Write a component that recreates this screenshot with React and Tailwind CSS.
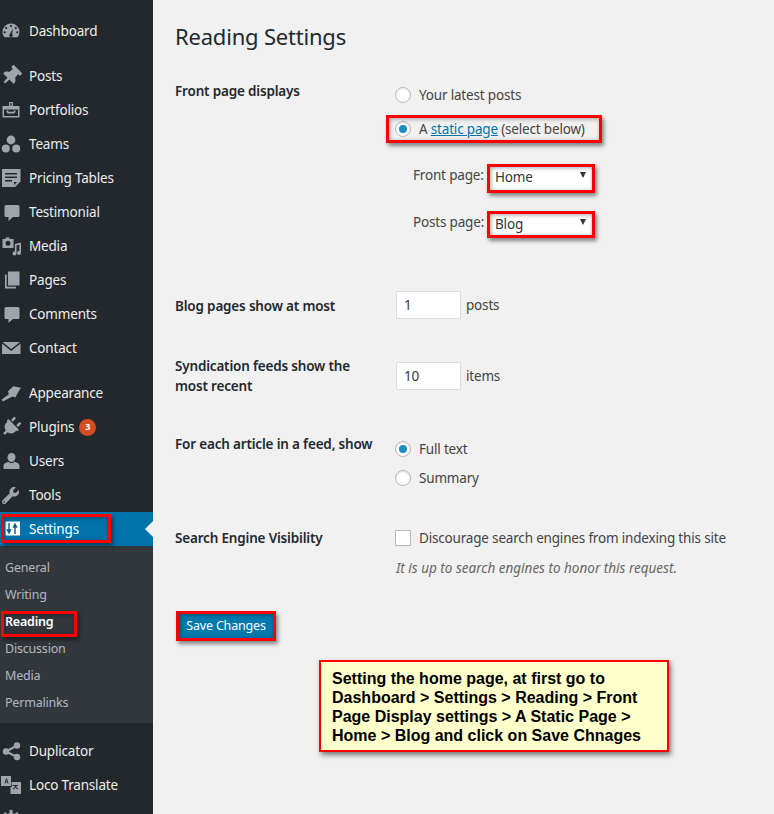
import { FaThumbtack, FaPlug, FaWrench } from 'react-icons/fa'

const Gauge = () => (
  <svg viewBox="0 0 20 20" className="h-5 w-5" fill="currentColor">
    <path fillRule="evenodd" d="M10 2.500A8.500 8.500 0 0 0 1.500 11c0 2 .7 3.800 1.900 5.200h13.200A8.500 8.500 0 0 0 18.500 11 8.500 8.500 0 0 0 10 2.500zM10 4a1.100 1.100 0 1 1 0 2.200A1.100 1.100 0 0 1 10 4zM5.200 6a1.100 1.100 0 1 1 0 2.200 1.100 1.100 0 0 1 0-2.200zm9.600 0a1.100 1.100 0 1 1 0 2.200 1.100 1.100 0 0 1 0-2.200zM3.700 10.200a1.100 1.100 0 1 1 0 2.200 1.100 1.100 0 0 1 0-2.200zm12.600 0a1.100 1.100 0 1 1 0 2.200 1.100 1.100 0 0 1 0-2.200zM12 7.500l-.9 5.600a1.700 1.700 0 1 1-2.200 0z" />
  </svg>
)

const Portfolio = () => (
  <svg viewBox="0 0 20 20" className="h-5 w-5" fill="currentColor">
    <path fillRule="evenodd" d="M8 2h4v4h6.500v11.500h-17V6H8zm1.200 1.200v2.400h1.600V3.200zM3 8v8h14V8zm2.500 2.500h1.800v1.300h5.400v-1.300h1.800v1.600l-1.400 1.500H6.900l-1.400-1.500z" />
    <path d="M3 8h14v1.500H3z" />
  </svg>
)

const Team = () => (
  <svg viewBox="0 0 20 20" className="h-5 w-5" fill="currentColor">
    <circle cx="10" cy="6" r="4.400" />
    <circle cx="4.800" cy="14.500" r="4" />
    <circle cx="15.200" cy="14.500" r="4" />
  </svg>
)

const Pricing = () => (
  <svg viewBox="0 0 20 20" className="h-5 w-5" fill="currentColor">
    <path fillRule="evenodd" d="M1 1h18.500v12.500l-5.500 5.500H1zM4 5v1.500h12V5zm0 3.500V10h12V8.500zm0 3.500v1.500h7V12zm9 2v3l3-3z" />
  </svg>
)

const Bubble = () => (
  <svg viewBox="0 0 20 20" className="h-5 w-5" fill="currentColor">
    <path d="M5 3h12a1.500 1.500 0 0 1 1.500 1.500v9A1.500 1.500 0 0 1 17 15h-5l-4.500 4v-4H5a1.500 1.500 0 0 1-1.500-1.500v-9A1.500 1.500 0 0 1 5 3z" />
  </svg>
)

const MediaIcon = () => (
  <svg viewBox="0 0 20 20" className="h-5 w-5" fill="currentColor">
    <path fillRule="evenodd" d="M4.500 1.500h4V3H12.500v9H1.500V3h3zM7 4.800a2.500 2.500 0 1 0 0 5 2.500 2.500 0 0 0 0-5z" />
    <path d="M14 8l6-1.500v10.500a2 2 0 1 1-1.700-2v-6.500L15.500 9.500v8a2 2 0 1 1-1.700-2z" />
  </svg>
)

const PagesIcon = () => (
  <svg viewBox="0 0 20 20" className="h-5 w-5" fill="currentColor">
    <path d="M7 1.500h11.500v14H7z" />
    <path d="M4 4.500h1.700v12.300H15v1.700H4z" />
  </svg>
)

const Mail = () => (
  <svg viewBox="0 0 20 20" className="h-5 w-5" fill="currentColor">
    <path d="M1.500 4h17.500L10.200 11z" />
    <path d="M1 5.500l9.200 7.500 9.300-7.500V16H1z" />
  </svg>
)

const Brush = () => (
  <svg viewBox="0 0 20 20" className="h-5 w-5" fill="currentColor">
    <path d="M1.800 18.500L.8 16.500l7-5.200-.8-3 5.300-5 7.700 1.500-3 4.800-2.700 4.800-2.800-1z" />
  </svg>
)

const UserIcon = () => (
  <svg viewBox="0 0 20 20" className="h-5 w-5" fill="currentColor">
    <path d="M10.500 2a4 4 0 0 1 4 4.200c0 2.300-1.800 4.800-4 4.800s-4-2.500-4-4.800a4 4 0 0 1 4-4.200z" />
    <path d="M7.300 10.800c1.700 1.700 4.700 1.700 6.400 0 2.800.7 4.800 2.200 4.800 4.200v3h-16v-3c0-2 2-3.500 4.800-4.200z" />
  </svg>
)

const Sliders = () => (
  <svg viewBox="0 0 20 20" className="h-5 w-5">
    <rect x="4.500" y="2.500" width="14.500" height="14" fill="#ffffff" />
    <path d="M8 4v7M6.500 11h3L8 14zM14 15V8M12.500 8h3L14 5z" stroke="#0a5f8f" strokeWidth="1.400" fill="#0a5f8f" />
  </svg>
)

const Share = () => (
  <svg viewBox="0 0 20 20" className="h-5 w-5" fill="currentColor">
    <circle cx="16" cy="4.500" r="3.200" />
    <circle cx="5" cy="10.500" r="3.200" />
    <circle cx="16" cy="16" r="3.200" />
    <path d="M5 10.500l11-6M5 10.500l11 5.500" stroke="currentColor" strokeWidth="2" />
  </svg>
)

const Translate = () => (
  <svg viewBox="0 0 20 20" className="h-5 w-5" fill="currentColor">
    <path fillRule="evenodd" d="M0 1h10v10H0zM3.500 8.500h1L4.900 7h1.200l.4 1.500h1L6 3.500H5zM5.500 4.800l.4 1.400H5.100z" />
    <path fillRule="evenodd" d="M10.500 7H20v12H9.500v-7H11zM11.800 10v1h2.300c-.4 1-1.200 2-2.500 2.800l.6.800c1-.6 1.800-1.300 2.300-2.100.5.800 1.300 1.500 2.300 2.100l.6-.8c-1.300-.8-2.100-1.800-2.500-2.800h2.100v-1z" />
  </svg>
)

const Gear = () => (
  <svg viewBox="0 0 20 20" className="h-5 w-5" fill="currentColor">
    <path d="M8.500 1h3v3l2.200 1 2.100-2.100 2.100 2.100-2.100 2.200 1 2.300h3v3h-3l-1 2.200 2.100 2.100-2.100 2.100-2.100-2.100-2.200 1v3h-3v-3l-2.200-1-2.100 2.100-2.100-2.100 2.100-2.100-1-2.200h-3v-3h3l1-2.300-2.100-2.200 2.100-2.100 2.100 2.100 2.200-1z" />
  </svg>
)

function MenuItem({ icon, label, active, badge }) {
  return (
    <div className={`relative flex h-[34px] items-center ${active ? 'bg-[#0073aa] text-white' : 'text-[#eeeeee]'}`}>
      <span className={`flex w-[21px] justify-center ${active ? '' : 'text-[#a0a5aa]'}`}>{icon}</span>
      <span className="ml-2">{label}</span>
      {badge && (
        <span className="ml-[5px] flex h-[17px] w-[17px] items-center justify-center rounded-full bg-[#d54e21] text-[9px] font-bold text-white">
          {badge}
        </span>
      )}
      {active && (
        <span className="absolute right-0 top-[9px] border-y-[8px] border-r-[8px] border-y-transparent border-r-[#f1f1f1]" />
      )}
    </div>
  )
}

function SubItem({ label, current }) {
  return (
    <div className={`flex h-[27px] items-center pl-[5px] text-[12.500px] tracking-[-0.2px] ${current ? 'font-semibold text-white' : 'text-[#b4b9be]'}`}>
      {label}
    </div>
  )
}

function Sidebar() {
  return (
    <aside className="h-[814px] w-[153px] shrink-0 overflow-hidden bg-[#23282d] pt-[14px]">
      <MenuItem icon={<Gauge />} label="Dashboard" />
      <div className="h-[11px]" />
      <MenuItem icon={<FaThumbtack className="h-5 w-5 rotate-45" />} label="Posts" />
      <MenuItem icon={<Portfolio />} label="Portfolios" />
      <MenuItem icon={<Team />} label="Teams" />
      <MenuItem icon={<Pricing />} label="Pricing Tables" />
      <MenuItem icon={<Bubble />} label="Testimonial" />
      <MenuItem icon={<MediaIcon />} label="Media" />
      <MenuItem icon={<PagesIcon />} label="Pages" />
      <MenuItem icon={<Bubble />} label="Comments" />
      <MenuItem icon={<Mail />} label="Contact" />
      <div className="h-[11px]" />
      <MenuItem icon={<Brush />} label="Appearance" />
      <MenuItem icon={<FaPlug className="h-5 w-5 rotate-45" />} label="Plugins" badge="3" />
      <MenuItem icon={<UserIcon />} label="Users" />
      <MenuItem icon={<FaWrench className="h-[17px] w-[17px]" />} label="Tools" />
      <MenuItem icon={<Sliders />} label="Settings" active />
      <div className="h-[177px] bg-[#32373c] pt-[8.500px]">
        <SubItem label="General" />
        <SubItem label="Writing" />
        <SubItem label="Reading" current />
        <SubItem label="Discussion" />
        <SubItem label="Media" />
        <SubItem label="Permalinks" />
      </div>
      <div className="h-[11px]" />
      <MenuItem icon={<Share />} label="Duplicator" />
      <MenuItem icon={<Translate />} label="Loco Translate" />
      <MenuItem icon={<Gear />} label="" />
    </aside>
  )
}

function Radio({ checked }) {
  return (
    <span className="-ml-px flex h-4 w-4 shrink-0 items-center justify-center rounded-full border border-[#b4b9be] bg-white shadow-[inset_0_1px_2px_rgba(0,0,0,0.1)]">
      {checked && <span className="h-2 w-2 rounded-full bg-[#1e8cbe]" />}
    </span>
  )
}

function SelectBox({ label }) {
  return (
    <div className="relative flex h-[26px] w-[102px] items-center bg-white pb-px pl-[6px] text-[#32373c]">
      {label}
      <span className="absolute right-[5px] top-[7px] border-x-[3.500px] border-t-[6px] border-x-transparent border-t-[#333333]" />
    </div>
  )
}

function NumberBox({ value, className = '' }) {
  return (
    <div className={`flex h-[28px] w-[65px] items-center border border-[#dddddd] bg-white pl-[7px] text-[#32373c] ${className}`}>
      {value}
    </div>
  )
}

function Mark({ className }) {
  return <div className={`pointer-events-none absolute border-[3px] border-[#ff0000] shadow-[2px_3px_4px_rgba(0,0,0,0.45),inset_1px_1px_4px_rgba(0,0,0,0.35)] ${className}`} />
}

export default function App() {
  return (
    <div className="relative flex h-[814px] w-[774px] overflow-hidden bg-[#f1f1f1] font-['Noto_Sans','Open_Sans',sans-serif] text-[13.500px] tracking-[-0.18px] text-[#444444]">
      <Sidebar />
      <main className="flex-1 pl-[22px]">
        <h1 className="pt-[21px] text-[22px] leading-[30px] tracking-[-0.2px] text-[#23282d]">Reading Settings</h1>

        <div className="mt-[30px] flex">
          <div className="w-[221px] font-semibold leading-5 text-[#23282d]">Front page displays</div>
          <div className="pt-1">
            <div className="flex h-5 items-center gap-2"><Radio /> Your latest posts</div>
            <div className="mt-[14px] flex h-5 items-center gap-2">
              <Radio checked />
              <span>A <span className="text-[#0073aa] underline">static page</span> (select below)</span>
            </div>
            <div className="ml-[17px] mt-[26px] flex items-start">
              <span className="w-[76px] leading-5">Front page:</span>
              <SelectBox label="Home" />
            </div>
            <div className="ml-[17px] mt-[21px] flex items-start">
              <span className="w-[76px] leading-5">Posts page:</span>
              <SelectBox label="Blog" />
            </div>
          </div>
        </div>

        <div className="mt-[53px] flex items-center">
          <div className="w-[221px] pt-[2px] font-semibold leading-5 text-[#23282d]">Blog pages show at most</div>
          <NumberBox value="1" />
          <span className="ml-[5px]">posts</span>
        </div>

        <div className="mt-[37px] flex items-start">
          <div className="w-[221px] font-semibold leading-5 text-[#23282d]">Syndication feeds show the<br />most recent</div>
          <NumberBox value="10" className="mt-[6px]" />
          <span className="ml-[5px] mt-[10px]">items</span>
        </div>

        <div className="mt-[38px] flex items-start">
          <div className="w-[221px] font-semibold leading-5 text-[#23282d]">For each article in a feed, show</div>
          <div className="pt-[5px]">
            <div className="flex h-5 items-center gap-2"><Radio checked /> Full text</div>
            <div className="mt-[9px] flex h-5 items-center gap-2"><Radio /> Summary</div>
          </div>
        </div>

        <div className="mt-[40px] flex items-start">
          <div className="w-[221px] font-semibold leading-5 text-[#23282d]">Search Engine Visibility</div>
          <div>
            <div className="flex h-5 items-center gap-2">
              <span className="-ml-px h-4 w-4 border border-[#b4b9be] bg-white" />
              Discourage search engines from indexing this site
            </div>
            <div className="mt-[10px] text-[13.500px] italic leading-5 tracking-normal text-[#666666]">It is up to search engines to honor this request.</div>
          </div>
        </div>

        <div className="ml-[3px] mt-[35px] flex h-[26px] w-[96px] items-center justify-center bg-[#0079ad] pt-px text-[12.500px] text-white">
          Save Changes
        </div>
      </main>

      <Mark className="left-[386px] top-[115px] h-[28px] w-[216px]" />
      <Mark className="left-[487px] top-[164px] h-[29px] w-[108px]" />
      <Mark className="left-[487px] top-[211px] h-[27px] w-[108px]" />
      <Mark className="left-[1px] top-[514px] h-[29px] w-[110px]" />
      <Mark className="left-[1px] top-[611px] h-[26px] w-[76px]" />
      <Mark className="left-[176px] top-[611px] h-[30px] w-[100px]" />

      <div className="absolute left-[319px] top-[660px] h-[92px] w-[350px] border-2 border-[#ff0000] bg-[#ffffcc] pl-[11px] pt-[7px] font-['Liberation_Sans',sans-serif] text-[16px] font-bold leading-[19px] tracking-normal text-black shadow-[2px_3px_5px_rgba(0,0,0,0.5)]">
        Setting the home page, at first go to<br />
        Dashboard &gt; Settings &gt; Reading &gt; Front<br />
        Page Display settings &gt; A Static Page &gt;<br />
        Home &gt; Blog and click on Save Chnages
      </div>
    </div>
  )
}
